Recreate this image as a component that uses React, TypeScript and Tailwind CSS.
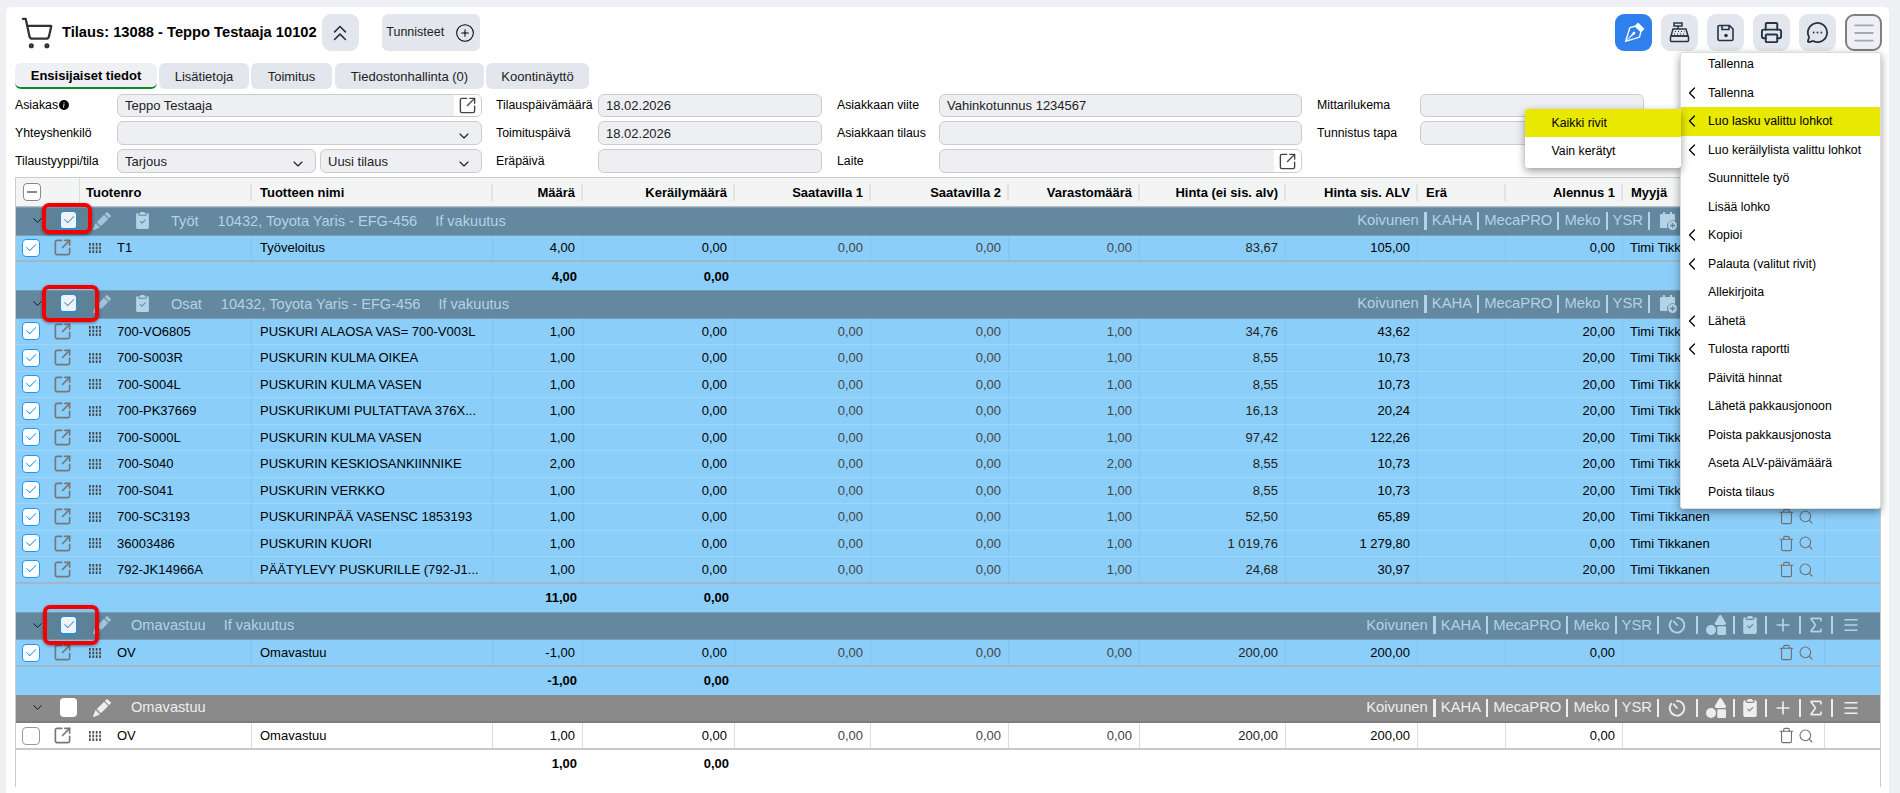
import React from 'react';
import { ChevronDown, ChevronLeft, ChevronsUp, CirclePlus, Menu, MessageCircleMore, Plus, Printer, Search, ShoppingCart, Sigma, Trash, SquareArrowOutUpRight } from 'lucide-react';
import { BsVectorPen, BsPencilFill, BsClipboard2CheckFill, BsInfoCircleFill, BsCheck2 } from 'react-icons/bs';
import { FaShapes } from 'react-icons/fa';

const COLS = 'grid grid-cols-[64px_172px_241px_90px_152px_136px_138px_131px_146px_132px_88px_117px_202px_56px]';

type Row = { no: string; name: string; qty: string; stock: string; net: string; gross: string; disc: string; seller: string };

const workRows: Row[] = [
  { no: 'T1', name: 'Työveloitus', qty: '4,00', stock: '0,00', net: '83,67', gross: '105,00', disc: '0,00', seller: 'Timi Tikkanen' },
];

const partRows: Row[] = [
  { no: '700-VO6805', name: 'PUSKURI ALAOSA VAS= 700-V003L', qty: '1,00', stock: '1,00', net: '34,76', gross: '43,62', disc: '20,00', seller: 'Timi Tikkanen' },
  { no: '700-S003R', name: 'PUSKURIN KULMA OIKEA', qty: '1,00', stock: '1,00', net: '8,55', gross: '10,73', disc: '20,00', seller: 'Timi Tikkanen' },
  { no: '700-S004L', name: 'PUSKURIN KULMA VASEN', qty: '1,00', stock: '1,00', net: '8,55', gross: '10,73', disc: '20,00', seller: 'Timi Tikkanen' },
  { no: '700-PK37669', name: 'PUSKURIKUMI PULTATTAVA 376X...', qty: '1,00', stock: '1,00', net: '16,13', gross: '20,24', disc: '20,00', seller: 'Timi Tikkanen' },
  { no: '700-S000L', name: 'PUSKURIN KULMA VASEN', qty: '1,00', stock: '1,00', net: '97,42', gross: '122,26', disc: '20,00', seller: 'Timi Tikkanen' },
  { no: '700-S040', name: 'PUSKURIN KESKIOSANKIINNIKE', qty: '2,00', stock: '2,00', net: '8,55', gross: '10,73', disc: '20,00', seller: 'Timi Tikkanen' },
  { no: '700-S041', name: 'PUSKURIN VERKKO', qty: '1,00', stock: '1,00', net: '8,55', gross: '10,73', disc: '20,00', seller: 'Timi Tikkanen' },
  { no: '700-SC3193', name: 'PUSKURINPÄÄ VASENSC 1853193', qty: '1,00', stock: '1,00', net: '52,50', gross: '65,89', disc: '20,00', seller: 'Timi Tikkanen' },
  { no: '36003486', name: 'PUSKURIN KUORI', qty: '1,00', stock: '1,00', net: '1 019,76', gross: '1 279,80', disc: '0,00', seller: 'Timi Tikkanen' },
  { no: '792-JK14966A', name: 'PÄÄTYLEVY PUSKURILLE (792-J1...', qty: '1,00', stock: '1,00', net: '24,68', gross: '30,97', disc: '20,00', seller: 'Timi Tikkanen' },
];

const headers = [
  { label: 'Määrä', right: true },
  { label: 'Keräilymäärä', right: true },
  { label: 'Saatavilla 1', right: true },
  { label: 'Saatavilla 2', right: true },
  { label: 'Varastomäärä', right: true },
  { label: 'Hinta (ei sis. alv)', right: true },
  { label: 'Hinta sis. ALV', right: true },
  { label: 'Erä', right: false },
  { label: 'Alennus 1', right: true },
  { label: 'Myyjä', right: false },
];

const menuItems = [
  { label: 'Tallenna', sub: false },
  { label: 'Tallenna', sub: true },
  { label: 'Luo lasku valittu lohkot', sub: true, active: true },
  { label: 'Luo keräilylista valittu lohkot', sub: true },
  { label: 'Suunnittele työ', sub: false },
  { label: 'Lisää lohko', sub: false },
  { label: 'Kopioi', sub: true },
  { label: 'Palauta (valitut rivit)', sub: true },
  { label: 'Allekirjoita', sub: false },
  { label: 'Lähetä', sub: true },
  { label: 'Tulosta raportti', sub: true },
  { label: 'Päivitä hinnat', sub: false },
  { label: 'Lähetä pakkausjonoon', sub: false },
  { label: 'Poista pakkausjonosta', sub: false },
  { label: 'Aseta ALV-päivämäärä', sub: false },
  { label: 'Poista tilaus', sub: false },
];

const CashRegisterIcon = () => (
  <svg width="21" height="21" viewBox="0 0 21 21" fill="none" stroke="currentColor" strokeWidth="1.5">
    <rect x="5" y="1" width="8" height="3" />
    <path d="M9 4v3" />
    <path d="M4 7h13l2 7H2z" />
    <rect x="1.5" y="14" width="18" height="5.5" rx="1" />
    <path d="M6 9.5h1M9 9.5h1M12 9.5h1M15 9.5h.5M5 12h1M8 12h1M11 12h1M14 12h1" strokeWidth="1.2" />
  </svg>
);

const FloppyIcon = () => (
  <svg width="18" height="18" viewBox="0 0 18 18" fill="none" stroke="currentColor" strokeWidth="1.6">
    <path d="M2.5 1.5h10l3.5 3.5v10a1.5 1.5 0 0 1-1.5 1.5h-12A1.5 1.5 0 0 1 1 15V3a1.5 1.5 0 0 1 1.5-1.5z" />
    <path d="M5 1.5v4h7v-4" />
    <circle cx="9" cy="11.5" r="1.8" fill="currentColor" stroke="none" />
  </svg>
);

const TimerIcon = () => (
  <svg width="20" height="20" viewBox="0 0 24 24" fill="none" stroke="currentColor" strokeWidth="2.2" strokeLinecap="round" className="ml-[3px] mr-[4px]">
    <path d="M12 3.5a8.8 8.8 0 1 1-7 3.5" />
    <path d="M12 12L8 7.5" />
  </svg>
);

const CalendarAddIcon = () => (
  <svg width="20" height="20" viewBox="0 0 20 20" fill="currentColor" className="ml-[3px] mr-[13px]">
    <path d="M5 1h2v2h5V1h2v2h2a1 1 0 0 1 1 1v6a5.5 5.5 0 0 0-7.5 7H3a1 1 0 0 1-1-1V4a1 1 0 0 1 1-1h2z" />
    <circle cx="14.5" cy="14.5" r="4.5" />
    <path d="M14.5 12v5M12 14.5h5" stroke="#63889f" strokeWidth="1.3" />
  </svg>
);

const IconButton = ({ children, className = '' }: { children: React.ReactNode; className?: string }) => (
  <button className={`flex h-[37px] w-[37px] items-center justify-center rounded-[9px] bg-[#e3e6ec] text-[#243447] ${className}`}>{children}</button>
);

const Label = ({ children, className = '' }: { children: React.ReactNode; className?: string }) => (
  <div className={`flex items-center whitespace-nowrap text-[12.3px] ${className}`}>{children}</div>
);

const Field = ({ value = '', className = '', chevron = false, link = false }: { value?: string; className?: string; chevron?: boolean; link?: boolean }) => (
  <div className={`relative flex h-full items-center overflow-hidden rounded-[6px] border border-[#cccccc] bg-[#eeeff3] pl-[7px] text-[#222] ${className}`}>
    <span>{value}</span>
    {chevron && <ChevronDown size={16} strokeWidth={1.75} className="absolute right-[9px] top-[6px] text-[#222]" />}
    {link && (
      <span className="absolute bottom-0 right-0 top-0 flex w-[27px] items-center justify-center bg-white">
        <SquareArrowOutUpRight size={19} strokeWidth={1.75} className="text-[#444]" />
      </span>
    )}
  </div>
);

const CheckBox = ({ checked = false, size = 'row' }: { checked?: boolean; size?: string }) => (
  <span className={`flex items-center justify-center bg-white ${size === 'row' ? 'h-[18px] w-[18px] rounded-[4px] border-[1.5px]' : 'h-[19px] w-[17px] rounded-[4px] border border-b-2'} ${checked ? 'border-[#2196f3] text-[#2196f3]' : size === 'row' ? 'border-[#999]' : 'border-white'}`}>
    {checked && <BsCheck2 size={14} />}
  </span>
);

const GridDots = () => (
  <svg width="12" height="10" viewBox="0 0 12 10" fill="#444">
    {[0, 3.7, 7.4].map(y => [0, 3.4, 6.8, 10.2].map(x => <rect key={`${x}-${y}`} x={x} y={y} width="1.7" height="2.6" />))}
  </svg>
);

const Sep = ({ thick = false }: { thick?: boolean }) => <span className={`mx-[5px] h-[18px] ${thick ? 'w-[3px]' : 'w-[2px]'} bg-current`} />;

const GroupHeader = ({ gray = false, title, car, insurance, clipboard = false, checked = true, calendar = false }: { gray?: boolean; title: string; car?: string; insurance?: string; clipboard?: boolean; checked?: boolean; calendar?: boolean }) => (
  <div className={`flex h-[28.6px] items-center pb-[1px] text-[14.6px] ${gray ? 'bg-[#8a8a8a] text-[#eeeeee] border-b-2 border-[#7e7e7e]' : 'bg-[#63889f] text-[#b4d3e6] border-y border-[#7b9db3]'}`}>
    <ChevronDown size={15} strokeWidth={1.5} className="ml-[14px] text-[#111]" />
    <span className="ml-[15px]"><CheckBox checked={checked} size="group" /></span>
    <BsPencilFill size={18} className={`ml-[16px] ${gray ? '' : 'text-[#a3c4d9]'}`} />
    {clipboard && <BsClipboard2CheckFill size={17} className="ml-[23px]" />}
    <span className="ml-[20px]">{title}</span>
    {car && <span className="ml-[19px]">{car}</span>}
    {insurance && <span className="ml-[18px]">{insurance}</span>}
    <div className="ml-auto flex items-center pr-[20px] text-[14.8px]">
      <span>Koivunen</span><Sep thick />
      <span>KAHA</span><Sep />
      <span>MecaPRO</span><Sep />
      <span>Meko</span><Sep />
      <span>YSR</span><Sep />
      {calendar ? <CalendarAddIcon /> : <TimerIcon />}
      <Sep />
      <FaShapes size={20} className="ml-[3px] mr-[2px]" /><Sep />
      <BsClipboard2CheckFill size={18} className="ml-[1px] mr-[1px]" /><Sep />
      <Plus size={20} className="ml-[1px] mr-[1px]" /><Sep />
      <Sigma size={20} /><Sep />
      <Menu size={18} className="ml-[4px]" />
    </div>
  </div>
);

const DataRow = ({ row, white = false, checked = true, last = false }: { row: Row; white?: boolean; checked?: boolean; last?: boolean }) => {
  const cell = `flex items-center border-r px-[7px] ${white ? 'border-[#dddddd]' : 'border-[#83c4ee]'}`;
  return (
    <div className={`${COLS} h-[26.5px] ${white ? 'bg-white' : 'bg-[#8bcefa]'} border-b ${last ? (white ? 'border-[#c8c8c8] border-b-2' : 'border-[#9fb7c7] border-b-2') : 'border-[#a0d6f8]'}`}>
      <div className="flex items-center pl-[6px]">
        <CheckBox checked={checked} />
        <SquareArrowOutUpRight size={19} strokeWidth={2.1} className="ml-[13px] text-[#777]" />
      </div>
      <div className={`${cell} !pl-[9px]`}>
        <GridDots />
        <span className="ml-[16px] whitespace-nowrap">{row.no}</span>
      </div>
      <div className={`${cell} !pl-[8px] whitespace-nowrap`}>{row.name}</div>
      <div className={`${cell} justify-end`}>{row.qty}</div>
      <div className={`${cell} justify-end`}>0,00</div>
      <div className={`${cell} justify-end text-[#444]`}>0,00</div>
      <div className={`${cell} justify-end text-[#444]`}>0,00</div>
      <div className={`${cell} justify-end text-[#444]`}>{row.stock}</div>
      <div className={`${cell} justify-end text-[#222]`}>{row.net}</div>
      <div className={`${cell} justify-end`}>{row.gross}</div>
      <div className={cell}></div>
      <div className={`${cell} justify-end`}>{row.disc}</div>
      <div className={`${cell} relative`}>
        <span className="whitespace-nowrap">{row.seller}</span>
        <span className="absolute left-[155px] top-[4px] flex items-center gap-[3px] text-[#707070]">
          <Trash size={17} strokeWidth={1.6} />
          <Search size={16} strokeWidth={1.6} />
        </span>
      </div>
      <div></div>
    </div>
  );
};

const TotalRow = ({ qty, white = false }: { qty: string; white?: boolean }) => (
  <div className={`${COLS} h-[28px] font-bold ${white ? 'bg-white' : 'bg-[#8bcefa]'}`}>
    <div className="col-span-3"></div>
    <div className="flex items-center justify-end pr-[6px]">{qty}</div>
    <div className="flex items-center justify-end pr-[6px]">0,00</div>
  </div>
);

const RedBox = ({ className }: { className: string }) => (
  <div className={`absolute rounded-[7px] border-[4px] border-[#f30000] bg-black/5 shadow-[0_1px_3px_rgba(0,0,0,0.45)] ${className}`}></div>
);

export default function App() {
  return (
    <div className="h-[793px] w-[1900px] overflow-hidden bg-[#eef0f4] pt-[7px] pl-[6px] font-['Liberation_Sans',Arial,sans-serif] text-[13px] leading-none text-black">
      <div className="relative h-[786px] w-[1883px] overflow-hidden rounded-t-[5px] bg-white pl-[9px] pr-[2px] pt-[7px]">
        <div className="flex h-[37px] items-center pr-[5px]">
          <ShoppingCart size={34} strokeWidth={1.6} className="ml-[5px] text-[#333]" />
          <h1 className="ml-[8px] text-[14.7px] font-bold">Tilaus: 13088 - Teppo Testaaja 10102</h1>
          <button className="ml-[5px] flex h-[37px] w-[37px] items-center justify-center rounded-[9px] bg-[#e3e6ec] text-[#243447]">
            <ChevronsUp size={26} strokeWidth={1.5} />
          </button>
          <button className="ml-[23px] flex h-[37px] w-[98px] items-center justify-center gap-[11px] rounded-[6px] bg-[#e3e6ec] text-[12.5px] text-[#222]">
            Tunnisteet
            <CirclePlus size={20} strokeWidth={1.25} className="text-black" />
          </button>
          <div className="ml-auto flex gap-[9px]">
            <IconButton className="!bg-[#2f80ed] !text-white"><BsVectorPen size={22} /></IconButton>
            <IconButton><CashRegisterIcon /></IconButton>
            <IconButton><FloppyIcon /></IconButton>
            <IconButton><Printer size={23} strokeWidth={2} /></IconButton>
            <IconButton><MessageCircleMore size={23} strokeWidth={1.9} /></IconButton>
            <IconButton className="border-2 border-[#808080] !bg-[#eef0f4] !text-[#a2a9b4]"><Menu size={26} strokeWidth={1.75} /></IconButton>
          </div>
        </div>

        <div className="mt-[12px] flex gap-[2px] text-[#222]">
          <div className="flex h-[26px] w-[142px] items-center justify-center rounded-[6px] border-b-2 border-[#0a8a2a] bg-[#eef0f4] pt-[1px] font-bold text-black">Ensisijaiset tiedot</div>
          <div className="flex h-[26px] w-[90px] items-center justify-center rounded-[6px] bg-[#e3e6ec]">Lisätietoja</div>
          <div className="flex h-[26px] w-[81px] items-center justify-center rounded-[6px] bg-[#e3e6ec]">Toimitus</div>
          <div className="ml-[1px] flex h-[26px] w-[149px] items-center justify-center rounded-[6px] bg-[#e3e6ec]">Tiedostonhallinta (0)</div>
          <div className="flex h-[26px] w-[103px] items-center justify-center rounded-[6px] bg-[#e3e6ec]">Koontinäyttö</div>
        </div>

        <div className="mt-[5px] grid grid-cols-[102px_365px_116px_224px_117px_363px_118px_224px] grid-rows-[23px_24px_24px] gap-y-[4px]">
          <Label>Asiakas<BsInfoCircleFill size={10} className="mb-[2px] ml-[1px]" /></Label>
          <Field value="Teppo Testaaja" link />
          <Label className="pl-[14px]">Tilauspäivämäärä</Label>
          <Field value="18.02.2026" />
          <Label className="pl-[15px]">Asiakkaan viite</Label>
          <Field value="Vahinkotunnus 1234567" />
          <Label className="pl-[15px]">Mittarilukema</Label>
          <Field />

          <Label>Yhteyshenkilö</Label>
          <Field chevron />
          <Label className="pl-[14px]">Toimituspäivä</Label>
          <Field value="18.02.2026" />
          <Label className="pl-[15px]">Asiakkaan tilaus</Label>
          <Field />
          <Label className="pl-[15px]">Tunnistus tapa</Label>
          <Field />

          <Label>Tilaustyyppi/tila</Label>
          <div className="grid grid-cols-[199px_162px] gap-[4px]">
            <Field value="Tarjous" chevron />
            <Field value="Uusi tilaus" chevron />
          </div>
          <Label className="pl-[14px]">Eräpäivä</Label>
          <Field />
          <Label className="pl-[15px]">Laite</Label>
          <Field link />
        </div>

        <div className="mt-[4px] h-[610px] w-[1866px] border-l border-r border-t border-[#cccccc]">
          <div className={`${COLS} h-[29px] border-b border-[#bbbbbb] bg-[#f3f5f5] font-bold`}>
            <div className="flex items-center border-r border-[#dddddd] pl-[7px]">
              <span className="flex h-[18px] w-[18px] items-center justify-center rounded-[4px] border-[1.5px] border-[#888] bg-white">
                <span className="h-[2px] w-[10px] bg-[#888]"></span>
              </span>
            </div>
            <div className="flex items-center pl-[6px]"><span className="flex h-[17px] w-full items-center border-r-2 border-[#e2e4e4]">Tuotenro</span></div>
            <div className="flex items-center pl-[8px]"><span className="flex h-[17px] w-full items-center border-r-2 border-[#e2e4e4]">Tuotteen nimi</span></div>
            {headers.map(h => (
              <div key={h.label} className="flex items-center">
                <span className={`flex h-[17px] w-full items-center border-r-2 border-[#e2e4e4] whitespace-nowrap ${h.right ? 'justify-end pr-[6px]' : 'pl-[8px]'}`}>{h.label}</span>
              </div>
            ))}
          </div>

          <GroupHeader title="Työt" car="10432, Toyota Yaris - EFG-456" insurance="If vakuutus" clipboard calendar />
          {workRows.map((r, i) => <DataRow key={i} row={r} last />)}
          <TotalRow qty="4,00" />

          <GroupHeader title="Osat" car="10432, Toyota Yaris - EFG-456" insurance="If vakuutus" clipboard calendar />
          {partRows.map((r, i) => <DataRow key={i} row={r} last={i === partRows.length - 1} />)}
          <TotalRow qty="11,00" />

          <GroupHeader title="Omavastuu" insurance="If vakuutus" />
          <DataRow row={{ no: 'OV', name: 'Omavastuu', qty: '-1,00', stock: '0,00', net: '200,00', gross: '200,00', disc: '0,00', seller: '' }} last />
          <TotalRow qty="-1,00" />

          <GroupHeader gray title="Omavastuu" checked={false} />
          <DataRow white checked={false} row={{ no: 'OV', name: 'Omavastuu', qty: '1,00', stock: '0,00', net: '200,00', gross: '200,00', disc: '0,00', seller: '' }} last />
          <TotalRow white qty="1,00" />
        </div>

        {/* red marks drawn over the table */}
        <RedBox className="left-[36px] top-[196px] h-[31px] w-[50px]" />
        <RedBox className="left-[36px] top-[278px] h-[37px] w-[57px]" />
        <RedBox className="left-[37px] top-[598px] h-[40px] w-[56px]" />

        {/* open menu and its submenu */}
        <div className="absolute left-[1674px] top-[45px] h-[457px] w-[201px] overflow-hidden rounded-[3px] border border-[#dddddd] bg-white text-[12.3px] shadow-[0_3px_8px_rgba(0,0,0,0.4)]">
          <div className="-mt-[3px]">
            {menuItems.map((m, i) => (
              <div key={i} className={`relative flex h-[28.5px] items-center pl-[27px] ${m.active ? 'bg-[#e8e800]' : ''}`}>
                {m.sub && <ChevronLeft size={20} strokeWidth={1.5} className="absolute left-[1px]" />}
                {m.label}
              </div>
            ))}
          </div>
        </div>
        <div className="absolute left-[1518.5px] top-[102px] h-[59px] w-[156px] overflow-hidden rounded-[3px] bg-white text-[12.3px] shadow-[0_3px_8px_rgba(0,0,0,0.4)]">
          <div className="flex h-[28px] items-center bg-[#e8e800] pl-[27px]">Kaikki rivit</div>
          <div className="flex h-[29px] items-center pl-[27px]">Vain kerätyt</div>
        </div>
      </div>
    </div>
  );
}
